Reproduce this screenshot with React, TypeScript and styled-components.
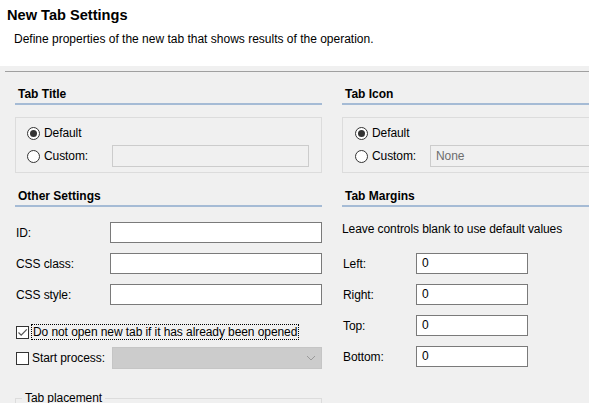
import React from "react";
import styled, { createGlobalStyle } from "styled-components";

const GlobalStyle = createGlobalStyle`
  html, body {
    margin: 0;
    padding: 0;
    background: #f0f0f0;
    overflow: hidden;
  }
  body {
    font-family: "Liberation Sans", Arial, sans-serif;
    font-size: 12px;
    color: #000;
  }
`;

function App() {
  return (
    <>
      <GlobalStyle />
      <Page>
        <Header>
          <Title>New Tab Settings</Title>
          <Description>
            Define properties of the new tab that shows results of the operation.
          </Description>
        </Header>

        <Body>
          <Separator />
          <Columns>
            <Column>
              <SectionHeading>Tab Title</SectionHeading>
              <GroupBox $padLeft={11}>
                <RadioRow>
                  <Radio $checked />
                  <span>Default</span>
                </RadioRow>
                <RadioRow>
                  <RadioLabel $width={81}>
                    <Radio />
                    <span>Custom:</span>
                  </RadioLabel>
                  <DisabledInput $width={197} />
                </RadioRow>
              </GroupBox>

              <SectionHeading $top={15}>Other Settings</SectionHeading>
              <Fields $top={15}>
                <FieldRow>
                  <FieldLabel $width={94}>ID:</FieldLabel>
                  <TextBox $width={213} />
                </FieldRow>
                <FieldRow>
                  <FieldLabel $width={94}>CSS class:</FieldLabel>
                  <TextBox $width={213} />
                </FieldRow>
                <FieldRow>
                  <FieldLabel $width={94}>CSS style:</FieldLabel>
                  <TextBox $width={213} />
                </FieldRow>
              </Fields>

              <CheckRow $top={19}>
                <CheckBox>
                  <svg width="11" height="11" viewBox="0 0 11 11">
                    <polyline
                      points="1.5,5.5 4.2,8.2 9.8,2.3"
                      fill="none"
                      stroke="#555"
                      strokeWidth="1.2"
                    />
                  </svg>
                </CheckBox>
                <FocusLabel>Do not open new tab if it has already been opened</FocusLabel>
              </CheckRow>

              <CheckRow $top={7}>
                <CheckLabel $width={94}>
                  <CheckBox />
                  <span>Start process:</span>
                </CheckLabel>
                <Combo $width={210} $disabled>
                  <Chevron width="10" height="6" viewBox="0 0 10 6">
                    <polyline points="1,1 5,5 9,1" fill="none" stroke="#9a9a9a" strokeWidth="1" />
                  </Chevron>
                </Combo>
              </CheckRow>

              <Placement>
                <legend>Tab placement</legend>
              </Placement>
            </Column>

            <Column>
              <SectionHeading>Tab Icon</SectionHeading>
              <GroupBox $padLeft={12}>
                <RadioRow>
                  <Radio $checked />
                  <span>Default</span>
                </RadioRow>
                <RadioRow>
                  <RadioLabel $width={71}>
                    <Radio />
                    <span>Custom:</span>
                  </RadioLabel>
                  <Combo $width={200}>
                    <ComboText>None</ComboText>
                  </Combo>
                </RadioRow>
              </GroupBox>

              <SectionHeading $top={15}>Tab Margins</SectionHeading>
              <Hint>Leave controls blank to use default values</Hint>
              <Fields $top={16}>
                <FieldRow>
                  <FieldLabel $width={73}>Left:</FieldLabel>
                  <TextBox $width={112}>0</TextBox>
                </FieldRow>
                <FieldRow>
                  <FieldLabel $width={73}>Right:</FieldLabel>
                  <TextBox $width={112}>0</TextBox>
                </FieldRow>
                <FieldRow>
                  <FieldLabel $width={73}>Top:</FieldLabel>
                  <TextBox $width={112}>0</TextBox>
                </FieldRow>
                <FieldRow>
                  <FieldLabel $width={73}>Bottom:</FieldLabel>
                  <TextBox $width={112}>0</TextBox>
                </FieldRow>
              </Fields>
            </Column>
          </Columns>
        </Body>
      </Page>
    </>
  );
}

const Page = styled.div`
  width: 589px;
  height: 403px;
  overflow: hidden;
`;

const Header = styled.div`
  background: #fff;
  height: 66px;
  padding: 6px 0 0 7px;
  box-sizing: border-box;
`;

const Title = styled.div`
  font-weight: bold;
  font-size: 14.6px;
  line-height: 18px;
`;

const Description = styled.div`
  margin: 7px 0 0 7px;
  line-height: 16px;
`;

const Body = styled.div`
  padding-top: 5px;
`;

const Separator = styled.div`
  margin-left: 5px;
  border-top: 1px solid #a0a0a0;
`;

const Columns = styled.div`
  display: grid;
  grid-template-columns: 307px 307px;
  column-gap: 20px;
  padding-left: 15px;
  letter-spacing: -0.08px;
`;

const Column = styled.div`
  display: flex;
  flex-direction: column;
`;

const SectionHeading = styled.div<{ $top?: number }>`
  margin-top: ${(p) => p.$top ?? 14}px;
  padding: 0 0 1px 3px;
  font-weight: bold;
  line-height: 16px;
  letter-spacing: 0;
  border-bottom: 2px solid #a5bbd5;
`;

const GroupBox = styled.div<{ $padLeft: number }>`
  margin-top: 12px;
  border: 1px solid #dcdcdc;
  padding: 7px 12px 5px ${(p) => p.$padLeft}px;
  display: flex;
  flex-direction: column;
  gap: 4px;
`;

const RadioRow = styled.div`
  display: flex;
  align-items: center;
  min-height: 16px;
  gap: 4px;
`;

const RadioLabel = styled.div<{ $width: number }>`
  display: flex;
  align-items: center;
  gap: 4px;
  width: ${(p) => p.$width}px;
`;

const Radio = styled.span<{ $checked?: boolean }>`
  width: 13px;
  height: 13px;
  box-sizing: border-box;
  border-radius: 50%;
  border: 1px solid #333;
  background: #fff;
  display: inline-flex;
  align-items: center;
  justify-content: center;
  flex: none;
  &::after {
    content: "";
    display: ${(p) => (p.$checked ? "block" : "none")};
    width: 7px;
    height: 7px;
    border-radius: 50%;
    background: #333;
  }
`;

const DisabledInput = styled.div<{ $width: number }>`
  width: ${(p) => p.$width}px;
  height: 22px;
  box-sizing: border-box;
  border: 1px solid #cccccc;
  background: #f0f0f0;
`;

const Combo = styled.div<{ $width: number; $disabled?: boolean }>`
  width: ${(p) => p.$width}px;
  height: 22px;
  box-sizing: border-box;
  border: 1px solid ${(p) => (p.$disabled ? "#c5c5c5" : "#cccccc")};
  background: ${(p) => (p.$disabled ? "#cccccc" : "#f0f0f0")};
  display: flex;
  align-items: center;
  justify-content: space-between;
  padding: 0 5px;
`;

const ComboText = styled.span`
  color: #6d6d6d;
`;

const Chevron = styled.svg`
  margin-left: auto;
  margin-right: 0;
`;

const Fields = styled.div<{ $top: number }>`
  margin-top: ${(p) => p.$top}px;
  display: flex;
  flex-direction: column;
  gap: 10px;
`;

const FieldRow = styled.div`
  display: flex;
  align-items: center;
  padding-left: 1px;
`;

const FieldLabel = styled.span<{ $width: number }>`
  width: ${(p) => p.$width}px;
  flex: none;
`;

const TextBox = styled.div<{ $width: number }>`
  width: ${(p) => p.$width}px;
  height: 21px;
  box-sizing: border-box;
  border: 1px solid #7a7a7a;
  background: #fff;
  padding: 0 5px;
  line-height: 19px;
`;

const CheckRow = styled.div<{ $top: number }>`
  margin-top: ${(p) => p.$top}px;
  display: flex;
  align-items: center;
  gap: 2px;
  padding-left: 1px;
`;

const CheckLabel = styled.div<{ $width: number }>`
  display: flex;
  align-items: center;
  gap: 3px;
  width: ${(p) => p.$width}px;
`;

const CheckBox = styled.span`
  width: 13px;
  height: 13px;
  box-sizing: border-box;
  border: 1px solid #333;
  background: #fff;
  display: inline-flex;
  align-items: center;
  justify-content: center;
  flex: none;
`;

const FocusLabel = styled.span`
  border: 1px dotted #000;
  line-height: 14px;
  padding: 0 1px;
`;

const Hint = styled.div`
  margin-top: 14px;
  line-height: 16px;
`;

const Placement = styled.fieldset`
  margin: 21px 0 0 0;
  padding: 0 0 30px 0;
  border: 1px solid #dcdcdc;
  & > legend {
    margin-left: 6px;
    padding: 0 3px;
    line-height: 16px;
  }
`;

export default App;
